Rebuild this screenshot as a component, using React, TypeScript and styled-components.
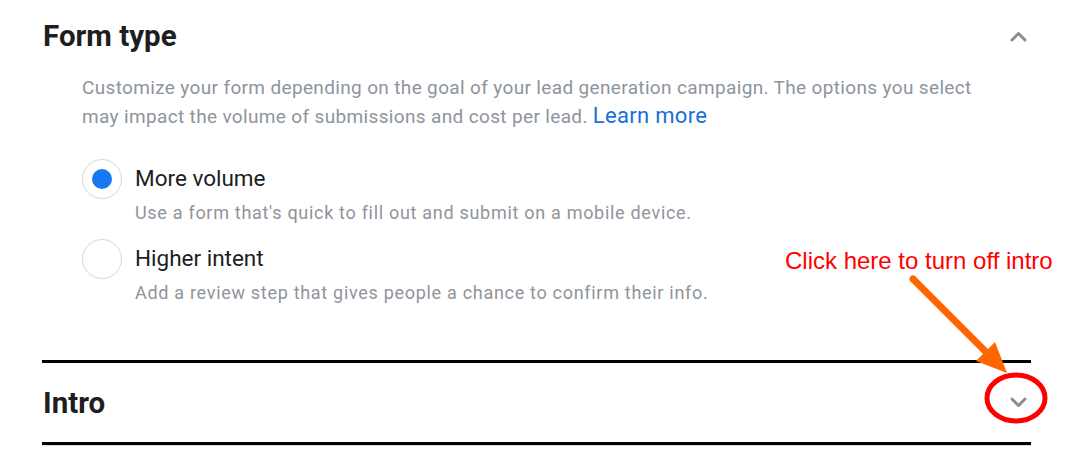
import React from 'react';
import styled, { createGlobalStyle } from 'styled-components';

const GlobalStyle = createGlobalStyle`
  body {
    margin: 0;
    background: #fff;
    font-family: Roboto, "Liberation Sans", Arial, sans-serif;
  }
`;

const Page = styled.div`
  position: relative;
  width: 1079px;
  height: 475px;
  overflow: hidden;
  padding: 14px 48px 0 42px;
  box-sizing: border-box;
`;

const Section = styled.section<{ divider?: boolean }>`
  border-top: ${({ divider }) => (divider ? '3px solid #000' : 'none')};
`;

const Header = styled.div<{ height: number }>`
  height: ${({ height }) => height}px;
  display: flex;
  align-items: center;
  justify-content: space-between;
  padding: 0 4px 0 1px;
`;

const Title = styled.h2`
  margin: 0;
  font-size: 29.5px;
  font-weight: 700;
  color: #1c1e21;
`;

const Chevron = styled.svg`
  width: 17px;
  height: 11px;
  & polyline {
    fill: none;
    stroke: #8a8d91;
    stroke-width: 3;
    stroke-linecap: round;
    stroke-linejoin: round;
  }
`;

const Body = styled.div`
  padding: 15px 0 55px 40px;
`;

const Description = styled.p`
  margin: 0;
  max-width: 905px;
  font-size: 19px;
  letter-spacing: 0.35px;
  line-height: 29px;
  color: #8d949e;
`;

const LearnMore = styled.a`
  color: #1a6ed8;
  font-size: 22px;
  line-height: 1;
  letter-spacing: 0.3px;
  text-decoration: none;
`;

const Options = styled.div`
  margin-top: 28px;
  display: flex;
  flex-direction: column;
  gap: 14px;
`;

const Option = styled.label`
  display: grid;
  grid-template-columns: 40px 1fr;
  column-gap: 13px;
`;

const Radio = styled.span<{ checked?: boolean }>`
  width: 40px;
  height: 40px;
  box-sizing: border-box;
  border: 1px solid #d4d7db;
  border-radius: 50%;
  display: flex;
  align-items: center;
  justify-content: center;
  &::after {
    content: '';
    width: 20px;
    height: 20px;
    border-radius: 50%;
    background: ${({ checked }) => (checked ? '#1877f2' : 'transparent')};
  }
`;

const OptionLabel = styled.span`
  font-size: 22.5px;
  line-height: 38px;
  color: #1c1e21;
`;

const OptionHint = styled.span`
  grid-column: 2;
  margin-top: 2px;
  font-size: 18px;
  letter-spacing: 0.7px;
  line-height: 24px;
  color: #90949c;
`;

const LastSection = styled.section`
  border-top: 3px solid #000;
  box-shadow: inset 0 1px 0 #dadde1;
  padding-top: 2px;
`;

const Note = styled.div`
  position: absolute;
  left: 785px;
  top: 246px;
  font-family: "Liberation Sans", Arial, sans-serif;
  font-size: 24px;
  line-height: 30px;
  color: #ff0000;
  white-space: nowrap;
`;

const Overlay = styled.svg`
  position: absolute;
  left: 0;
  top: 0;
  width: 1079px;
  height: 475px;
  pointer-events: none;
`;

const Up = () => (
  <Chevron viewBox="0 0 17 11">
    <polyline points="2,9 8.5,2.5 15,9" />
  </Chevron>
);

const Down = () => (
  <Chevron viewBox="0 0 17 11">
    <polyline points="2,2 8.5,8.5 15,2" />
  </Chevron>
);

const App = () => {
  return (
    <>
      <GlobalStyle />
      <Page>
        <Section>
          <Header height={44}>
            <Title>Form type</Title>
            <Up />
          </Header>
          <Body>
            <Description>
              Customize your form depending on the goal of your lead generation campaign. The options you select
              may impact the volume of submissions and cost per lead. <LearnMore href="#">Learn more</LearnMore>
            </Description>
            <Options>
              <Option>
                <Radio checked />
                <OptionLabel>More volume</OptionLabel>
                <OptionHint>Use a form that's quick to fill out and submit on a mobile device.</OptionHint>
              </Option>
              <Option>
                <Radio />
                <OptionLabel>Higher intent</OptionLabel>
                <OptionHint>Add a review step that gives people a chance to confirm their info.</OptionHint>
              </Option>
            </Options>
          </Body>
        </Section>
        <Section divider>
          <Header height={79}>
            <Title>Intro</Title>
            <Down />
          </Header>
        </Section>
        <LastSection>
          <Header height={80}>
            <Title>Questions</Title>
            <Down />
          </Header>
        </LastSection>
        <Note>Click here to turn off intro</Note>
        <Overlay viewBox="0 0 1079 475">
          <line x1="913" y1="279" x2="988" y2="354" stroke="#ff6600" strokeWidth="7" strokeLinecap="round" />
          <polygon points="1007,373 995,342 976,361" fill="#ff6600" />
          <ellipse cx="1016" cy="398" rx="29" ry="23" fill="none" stroke="#ff0000" strokeWidth="5" />
        </Overlay>
      </Page>
    </>
  );
};

export default App;
